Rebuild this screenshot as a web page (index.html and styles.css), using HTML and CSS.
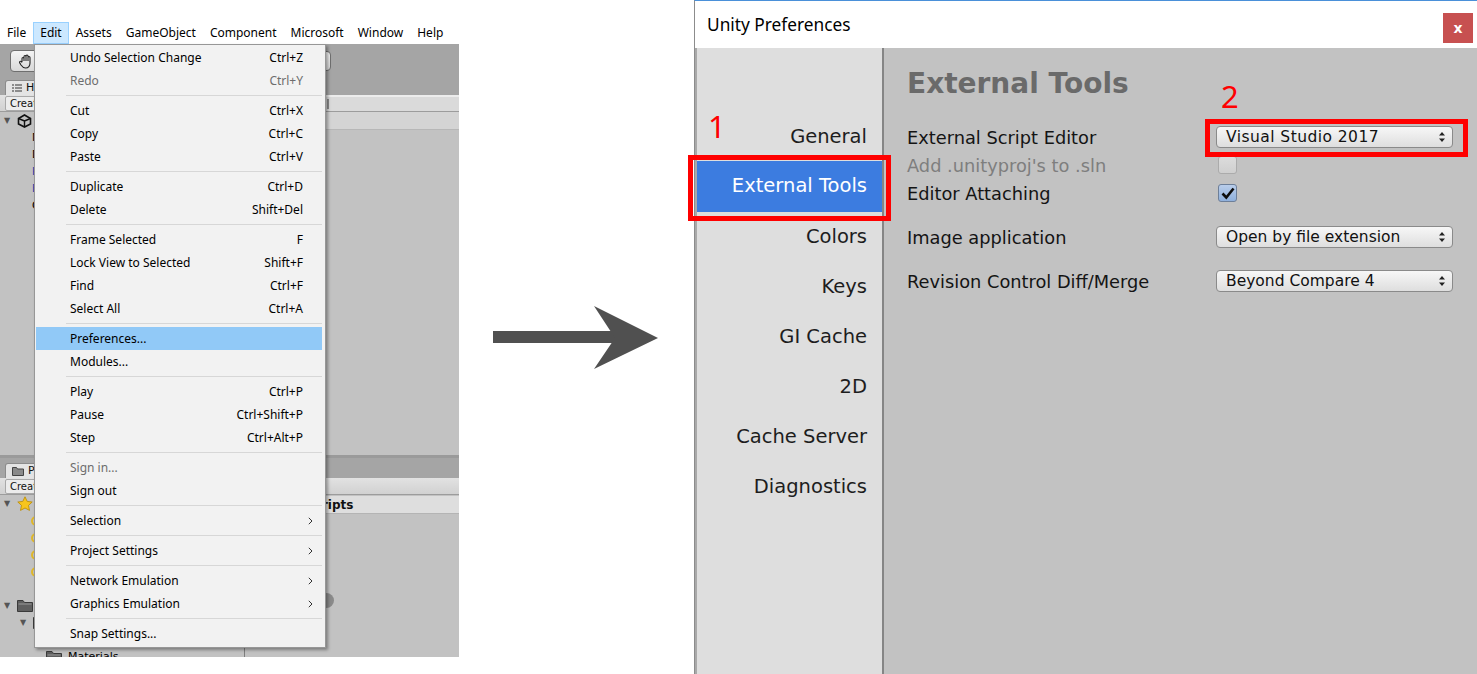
FILE: index.html
```html
<!DOCTYPE html>
<html>
<head>
<meta charset="utf-8">
<title>Unity Preferences</title>
<link rel="stylesheet" href="styles.css">
</head>
<body>
<div class="editor">
  <div class="menubar">
    <span class="mb">File</span><span class="mb on">Edit</span><span class="mb">Assets</span><span class="mb">GameObject</span><span class="mb">Component</span><span class="mb">Microsoft</span><span class="mb">Window</span><span class="mb">Help</span>
  </div>
  <div class="toolbar">
    <div class="tools">
      <span class="tool">
        <svg width="16" height="16" viewBox="0 0 16 16"><path d="M4 9V5.5a1 1 0 0 1 2 0V8M6 8V3.5a1 1 0 0 1 2 0V8M8 8V3a1 1 0 0 1 2 0v5M10 8V4.5a1 1 0 0 1 2 0V10c0 3-1.5 5-4.5 5C5 15 4 13.5 3 12L1.6 9.6a1 1 0 0 1 1.7-1L4 9.5" fill="none" stroke="#222" stroke-width="1.1" stroke-linejoin="round"/></svg>
      </span><span class="tool"></span><span class="tool"></span><span class="tool"></span><span class="tool"></span>
    </div>
    <div class="pivot"><span class="tbtn"></span><span class="tbtn"></span></div>
  </div>
  <div class="upper">
    <div class="pane hier">
      <div class="tabrow"><span class="tab"><svg width="10" height="8" viewBox="0 0 10 8"><path d="M0 1h2M3 1h7M0 4h2M3 4h7M0 7h2M3 7h7" stroke="#333" stroke-width="1"/></svg>Hierarchy</span></div>
      <div class="ptool"><span class="pbtn">Create ▾</span></div>
      <div class="tree">
        <div class="row"><span class="fold">▼</span><svg class="ulogo" width="15" height="14" viewBox="0 0 15 14"><path d="M7.5 1L13.5 4.5V10L7.5 13L1.5 10V4.5Z" fill="none" stroke="#111" stroke-width="1.6"/><path d="M7.5 7V13M7.5 7L1.5 4.5M7.5 7L13.5 4.5" stroke="#111" stroke-width="1.4"/></svg></div>
        <div class="row ind">Main Camera</div>
        <div class="row ind">Directional Light</div>
        <div class="row ind prefab">Player</div>
        <div class="row ind prefab">Enemy</div>
        <div class="row ind">Canvas</div>
      </div>
    </div>
    <div class="pane scene">
      <div class="tabrow"><span class="tab">Scene</span></div>
      <div class="ptool stool"><span class="sdiv"></span></div>
      <div class="ptool2"></div>
      <div class="view"></div>
    </div>
  </div>
  <div class="lower">
    <div class="tabrow"><span class="tab"><svg width="12" height="10" viewBox="0 0 12 10"><path d="M0.5 1.5h4l1 1.5h6v6.5h-11z" fill="#8a8a8a" stroke="#444" stroke-width="1"/></svg>Project</span></div>
    <div class="ptool"><span class="pbtn">Create ▾</span></div>
    <div class="projbody">
      <div class="ptree">
        <div class="row"><span class="fold">▼</span><svg class="ico" width="16" height="15" viewBox="0 0 16 15"><path d="M8 0.8l2.2 4.6 5 .6-3.7 3.4 1 5L8 12 3.5 14.4l1-5L.8 6l5-.6z" fill="#f7c51e" stroke="#b98a00" stroke-width="0.8"/></svg></div>
        <div class="row fav"><span class="dot"></span></div>
        <div class="row fav"><span class="dot"></span></div>
        <div class="row fav"><span class="dot"></span></div>
        <div class="row fav"><span class="dot"></span></div>
        <div class="row"></div>
        <div class="row"><span class="fold">▼</span><svg class="ico" width="16" height="13" viewBox="0 0 16 13"><path d="M0.5 1.5h5.5l1.5 2h8v9h-15z" fill="#5f5f5f" stroke="#3a3a3a"/><path d="M1.5 5h13" stroke="#9a9a9a"/></svg></div>
        <div class="row ind2"><span class="fold">▼</span><svg class="ico" width="16" height="13" viewBox="0 0 16 13"><path d="M0.5 1.5h5.5l1.5 2h8v9h-15z" fill="#5f5f5f" stroke="#3a3a3a"/></svg></div>
        <div class="row ind3"><svg class="ico" width="16" height="13" viewBox="0 0 16 13"><path d="M0.5 1.5h5.5l1.5 2h8v9h-15z" fill="#5f5f5f" stroke="#3a3a3a"/></svg></div>
        <div class="row ind3"><svg class="ico" width="16" height="13" viewBox="0 0 16 13"><path d="M0.5 1.5h5.5l1.5 2h8v9h-15z" fill="#5f5f5f" stroke="#3a3a3a"/><path d="M1.5 5h13" stroke="#9a9a9a"/></svg><span class="rtxt">Materials</span></div>
      </div>
      <div class="assets">
        <div class="crumb"><span>Assets</span><span class="crarr">▸</span><span>Scripts</span></div>
        <span class="knob"></span>
      </div>
    </div>
  </div>

  <div class="menu">
    <div class="mi"><span>Undo Selection Change</span><span class="sc">Ctrl+Z</span></div>
    <div class="mi dis"><span>Redo</span><span class="sc">Ctrl+Y</span></div>
    <div class="sep"></div>
    <div class="mi"><span>Cut</span><span class="sc">Ctrl+X</span></div>
    <div class="mi"><span>Copy</span><span class="sc">Ctrl+C</span></div>
    <div class="mi"><span>Paste</span><span class="sc">Ctrl+V</span></div>
    <div class="sep"></div>
    <div class="mi"><span>Duplicate</span><span class="sc">Ctrl+D</span></div>
    <div class="mi"><span>Delete</span><span class="sc">Shift+Del</span></div>
    <div class="sep"></div>
    <div class="mi"><span>Frame Selected</span><span class="sc">F</span></div>
    <div class="mi"><span>Lock View to Selected</span><span class="sc">Shift+F</span></div>
    <div class="mi"><span>Find</span><span class="sc">Ctrl+F</span></div>
    <div class="mi"><span>Select All</span><span class="sc">Ctrl+A</span></div>
    <div class="sep"></div>
    <div class="mi hl"><span>Preferences...</span></div>
    <div class="mi"><span>Modules...</span></div>
    <div class="sep"></div>
    <div class="mi"><span>Play</span><span class="sc">Ctrl+P</span></div>
    <div class="mi"><span>Pause</span><span class="sc">Ctrl+Shift+P</span></div>
    <div class="mi"><span>Step</span><span class="sc">Ctrl+Alt+P</span></div>
    <div class="sep"></div>
    <div class="mi dis"><span>Sign in...</span></div>
    <div class="mi"><span>Sign out</span></div>
    <div class="sep"></div>
    <div class="mi"><span>Selection</span><svg class="chev" width="5" height="8" viewBox="0 0 5 8"><path d="M0.8 0.8L4 4L0.8 7.2" fill="none" stroke="#333" stroke-width="1"/></svg></div>
    <div class="sep"></div>
    <div class="mi"><span>Project Settings</span><svg class="chev" width="5" height="8" viewBox="0 0 5 8"><path d="M0.8 0.8L4 4L0.8 7.2" fill="none" stroke="#333" stroke-width="1"/></svg></div>
    <div class="sep"></div>
    <div class="mi"><span>Network Emulation</span><svg class="chev" width="5" height="8" viewBox="0 0 5 8"><path d="M0.8 0.8L4 4L0.8 7.2" fill="none" stroke="#333" stroke-width="1"/></svg></div>
    <div class="mi"><span>Graphics Emulation</span><svg class="chev" width="5" height="8" viewBox="0 0 5 8"><path d="M0.8 0.8L4 4L0.8 7.2" fill="none" stroke="#333" stroke-width="1"/></svg></div>
    <div class="sep"></div>
    <div class="mi"><span>Snap Settings...</span></div>
  </div>
</div>

<div class="arrowzone">
  <svg width="166" height="65" viewBox="0 0 166 65"><path d="M0 25H123V37H0Z" fill="#505050"/><path d="M101 0L165 32L101 63L122 32Z" fill="#505050"/></svg>
</div>

<div class="prefs">
  <div class="titlebar">
    <span class="title">Unity Preferences</span>
    <span class="close">x</span>
  </div>
  <div class="pbody">
    <div class="side">
      <div class="si">General</div>
      <div class="si sel">External Tools</div>
      <div class="si">Colors</div>
      <div class="si">Keys</div>
      <div class="si">GI Cache</div>
      <div class="si">2D</div>
      <div class="si">Cache Server</div>
      <div class="si">Diagnostics</div>
    </div>
    <div class="content">
      <div class="heading">External Tools</div>
      <div class="prow">
        <span class="lbl">External Script Editor</span>
        <div class="dd wide"><span>Visual Studio 2017</span><svg width="6" height="10" viewBox="0 0 6 10"><path d="M3 0L6 3.6H0ZM0 6.4H6L3 10Z" fill="#222"/></svg></div>
      </div>
      <div class="prow">
        <span class="lbl dis">Add .unityproj's to .sln</span>
        <span class="cb off"></span>
      </div>
      <div class="prow">
        <span class="lbl">Editor Attaching</span>
        <span class="cb on"><svg width="16" height="15" viewBox="0 0 16 15"><path d="M2.5 7.5L6.3 11.5L13.5 2.5" fill="none" stroke="#0d0d0d" stroke-width="2.6" stroke-linejoin="miter"/></svg></span>
      </div>
      <div class="prow gap">
        <span class="lbl">Image application</span>
        <div class="dd"><span>Open by file extension</span><svg width="6" height="10" viewBox="0 0 6 10"><path d="M3 0L6 3.6H0ZM0 6.4H6L3 10Z" fill="#222"/></svg></div>
      </div>
      <div class="prow gap">
        <span class="lbl">Revision Control Diff/Merge</span>
        <div class="dd"><span>Beyond Compare 4</span><svg width="6" height="10" viewBox="0 0 6 10"><path d="M3 0L6 3.6H0ZM0 6.4H6L3 10Z" fill="#222"/></svg></div>
      </div>
    </div>
  </div>
  <div class="mark m1">1</div>
  <div class="rbox b1"></div>
  <div class="mark m2">2</div>
  <div class="rbox b2"></div>
</div>
</body>
</html>
```
FILE: styles.css
```css
* { box-sizing: border-box; }
html, body { margin: 0; padding: 0; }
body {
  width: 1477px;
  height: 674px;
  overflow: hidden;
  background: #ffffff;
  display: flex;
  align-items: flex-start;
  font-family: "DejaVu Sans", sans-serif;
}

/* ---------- Unity editor (left) ---------- */
.editor {
  position: relative;
  width: 459px;
  height: 635px;
  margin-top: 22px;
  background: #c2c2c2;
  display: flex;
  flex-direction: column;
  overflow: hidden;
  flex: none;
}
.editor > * { flex: none; }
.menubar {
  height: 22px;
  background: #ffffff;
  display: flex;
  align-items: stretch;
  font: 12px "Noto Sans", sans-serif;
  color: #000;
}
.mb { padding: 0 7px; line-height: 22px; }
.mb.on {
  background: #cce8ff;
  border: 1px solid #99d1ff;
  line-height: 20px;
  padding: 0 6px;
}
.toolbar {
  height: 34px;
  background: #a5a5a5;
  display: flex;
  align-items: center;
  padding-left: 10px;
  gap: 70px;
}
.tools { display: flex; }
.tool {
  width: 29px;
  height: 22px;
  background: linear-gradient(#f4f4f4, #d9d9d9);
  border: 1px solid #6f6f6f;
  border-left: none;
  display: flex;
  align-items: center;
  justify-content: center;
}
.tool:first-child { border-left: 1px solid #6f6f6f; border-radius: 4px 0 0 4px; padding-left: 3px; }
.tool:last-child { border-radius: 0 4px 4px 0; }
.pivot { display: flex; }
.tbtn {
  width: 53px;
  height: 20px;
  background: linear-gradient(#f4f4f4, #d9d9d9);
  border: 1px solid #6f6f6f;
}
.tbtn:first-child { border-radius: 4px 0 0 4px; border-right: none; }
.tbtn:last-child { border-radius: 0 4px 4px 0; }

.upper { height: 377px; display: flex; }
.pane { display: flex; flex-direction: column; min-height: 0; overflow: hidden; }
.pane > * { flex: none; }
.hier { width: 245px; border-right: 1px solid #8e8e8e; }
.scene { flex: 1; }
.tabrow {
  height: 17px;
  background: #a5a5a5;
  display: flex;
  align-items: flex-end;
  padding-left: 5px;
  gap: 1px;
}
.tab {
  height: 15px;
  padding: 0 8px 0 6px;
  background: #e4e4e4;
  border: 1px solid #8b8b8b;
  border-bottom: none;
  border-radius: 3px 3px 0 0;
  font-size: 11px;
  line-height: 14px;
  color: #111;
  display: flex;
  align-items: center;
  gap: 4px;
}
.ptool {
  height: 17px;
  background: linear-gradient(#e2e2e2, #d1d1d1);
  border-bottom: 1px solid #9c9c9c;
  display: flex;
  align-items: center;
  padding-left: 5px;
}
.pbtn {
  font-size: 10px;
  color: #111;
  border: 1px solid #a9a9a9;
  border-radius: 2px;
  padding: 0 4px;
  line-height: 13px;
  background: #ececec;
}
.stool { background: #dadada; border-top: 2px solid #ececec; }
.sdiv { margin-left: 77px; width: 2px; height: 10px; background: #8c8c8c; }
.ptool2 { height: 18px; background: #d4d4d4; border-bottom: 1px solid #b7b7b7; }
.scene .view { flex: 1; background: #c2c2c2; }

.tree, .ptree { font-size: 11px; color: #000; }
.row {
  height: 17px;
  display: flex;
  align-items: center;
  white-space: nowrap;
  padding-left: 4px;
  gap: 4px;
}
.fold { font-size: 8px; color: #555; width: 9px; }
.row.ind { padding-left: 32px; }
.row.ind2 { padding-left: 20px; }
.row.ind3 { padding-left: 46px; }
.row.prefab { color: #1d3ea8; }
.rtxt { margin-left: 2px; }
.dot {
  width: 10px; height: 10px;
  border-radius: 50%;
  border: 2px solid #e0b82a;
  flex: none;
}
.row.fav { padding-left: 31px; }

.lower {
  height: 202px;
  display: flex;
  flex-direction: column;
  border-top: 3px solid #9a9a9a;
}
.lower > * { flex: none; }
.lower .tabrow { height: 20px; }
.lower .projbody { flex: 1; min-height: 0; display: flex; overflow: hidden; }
.ptree { width: 245px; border-right: 1px solid #7e7e7e; }
.assets { flex: 1; position: relative; padding-top: 1px; }
.crumb {
  height: 18px;
  background: #dedede;
  border-bottom: 1px solid #b4b4b4;
  font-weight: bold;
  font-size: 12px;
  color: #111;
  display: flex;
  align-items: center;
  padding-left: 4px;
  gap: 4px;
}
.crarr { font-size: 9px; color: #555; }
.knob {
  position: absolute;
  left: 74px;
  top: 98px;
  width: 15px;
  height: 15px;
  border-radius: 50%;
  background: #8a8a8a;
}

/* dropdown menu over editor */
.menu {
  position: absolute;
  left: 34px;
  top: 22px;
  width: 292px;
  background: #f2f2f2;
  border: 1px solid #979797;
  padding: 1px 3px 2px 1px;
  box-shadow: 2px 2px 3px rgba(0, 0, 0, 0.35);
  font: 12px "Noto Sans", sans-serif;
  color: #000;
}
.mi {
  height: 23px;
  display: flex;
  align-items: center;
  justify-content: space-between;
  padding-left: 34px;
  padding-right: 19px;
  position: relative;
}
.mi.dis { color: #6d6d6d; }
.mi.hl { background: #91c9f7; }
.chev { position: absolute; right: 9px; top: 8px; }
.sep {
  height: 7px;
  margin-left: 30px;
  display: flex;
  align-items: center;
}
.sep::before {
  content: "";
  flex: 1;
  height: 1px;
  background: #d7d7d7;
}

/* ---------- arrow ---------- */
.arrowzone {
  width: 235px;
  flex: none;
  padding: 306px 0 0 34px;
}
.arrowzone svg { display: block; }

/* ---------- Unity Preferences window ---------- */
.prefs {
  position: relative;
  width: 783px;
  height: 674px;
  flex: none;
  display: flex;
  flex-direction: column;
  border-top: 1px solid #4a90d9;
  border-left: 1px solid #8c8c8c;
}
.titlebar {
  height: 47px;
  background: #ffffff;
  display: flex;
  justify-content: space-between;
  align-items: center;
  padding-left: 12px;
}
.title { font: 17.3px "Noto Sans", sans-serif; color: #000; }
.close {
  align-self: flex-start;
  margin-top: 12px;
  margin-right: 4px;
  width: 30px;
  height: 30px;
  background: #c75050;
  color: #fff;
  font: bold 14px "DejaVu Sans", sans-serif;
  display: flex;
  align-items: center;
  justify-content: center;
}
.pbody {
  flex: 1;
  display: flex;
  border-left: 2px solid #a9a9a9;
}
.side {
  width: 187px;
  background: #dedede;
  border-right: 2px solid #858585;
  padding-top: 64px;
}
.si {
  height: 50px;
  line-height: 50px;
  text-align: right;
  padding-right: 15px;
  font-size: 19.5px;
  color: #1d1d1d;
}
.si.sel { background: #3c7ce0; color: #ffffff; margin-top: -1px; height: 51px; }
.content {
  flex: 1;
  background: #c2c2c2;
  padding: 21px 0 0 23px;
}
.heading {
  font-size: 28px;
  font-weight: bold;
  line-height: 30px;
  color: #6a6a6a;
  margin-bottom: 24px;
}
.prow {
  height: 28px;
  display: grid;
  grid-template-columns: 309px 237px;
  align-items: center;
}
.prow.gap { margin-top: 16px; }
.lbl { font-size: 17.8px; color: #141414; white-space: nowrap; }
.lbl.dis { color: #7e7e7e; }
.dd {
  height: 22px;
  border: 1px solid #8a8a8a;
  border-radius: 4px;
  background: linear-gradient(#f7f7f7, #dedede);
  display: flex;
  align-items: center;
  justify-content: space-between;
  padding: 0 7px 0 9px;
  font-size: 15.5px;
  color: #111;
  white-space: nowrap;
}
.dd.wide { letter-spacing: 0.45px; }
.cb {
  width: 19px;
  height: 18px;
  margin-left: 2px;
  border-radius: 3px;
  display: flex;
  align-items: center;
  justify-content: center;
}
.cb.off { background: linear-gradient(#dcdcdc, #cfcfcf); border: 1px solid #ababab; }
.cb.on { background: linear-gradient(#b9cdea, #8fb0dc); border: 1px solid #6d7f99; }

.mark {
  position: absolute;
  font: 31px "Noto Sans", sans-serif;
  line-height: 31px;
  color: #ff0000;
}
.m1 { left: 13px; top: 110px; }
.m2 { left: 526px; top: 80px; }
.rbox { position: absolute; border: 5px solid #ff0000; }
.b1 { left: -7px; top: 154px; width: 203px; height: 66px; }
.b2 { left: 510px; top: 118px; width: 263px; height: 38px; }
```
